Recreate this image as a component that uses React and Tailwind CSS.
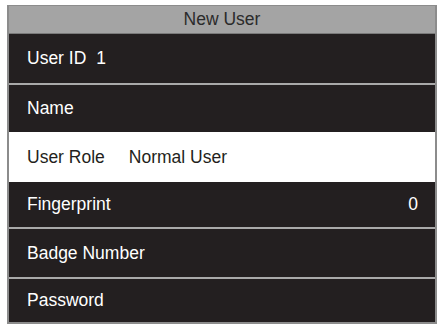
export default function App() {
  const font = { fontFamily: '"Liberation Sans", Arial, sans-serif' }
  return (
    <div className="h-[329px] w-[443px] bg-white pl-[7px] pr-[6px] pt-[5px]" style={font}>
      <div className="flex flex-col border-x-2 border-b-2 border-t border-[#8c8c8c] bg-[#231f20] text-[17.5px] text-white">
        <div className="flex h-[28px] items-center justify-center border-b border-[#7a7a7a] bg-[#a4a4a4] text-[#2b2b2b]">New User</div>
        <div className="flex h-[49px] items-center pl-[18px]">
          <span>User ID</span>
          <span className="ml-[10px]">1</span>
        </div>
        <div className="h-[2px] bg-[#a9a9a9]" />
        <div className="flex h-[47px] items-center pl-[18px]">Name</div>
        <div className="flex h-[50px] items-center bg-white pl-[18px] text-[#231f20]">
          <span>User Role</span>
          <span className="ml-[24px]">Normal User</span>
        </div>
        <div className="flex h-[45px] items-center justify-between pl-[18px] pr-[17px]">
          <span>Fingerprint</span>
          <span>0</span>
        </div>
        <div className="h-[2px] bg-[#a9a9a9]" />
        <div className="flex h-[48px] items-center pl-[18px]">Badge Number</div>
        <div className="h-[2px] bg-[#a9a9a9]" />
        <div className="flex h-[43px] items-center pl-[18px]">Password</div>
      </div>
    </div>
  )
}
